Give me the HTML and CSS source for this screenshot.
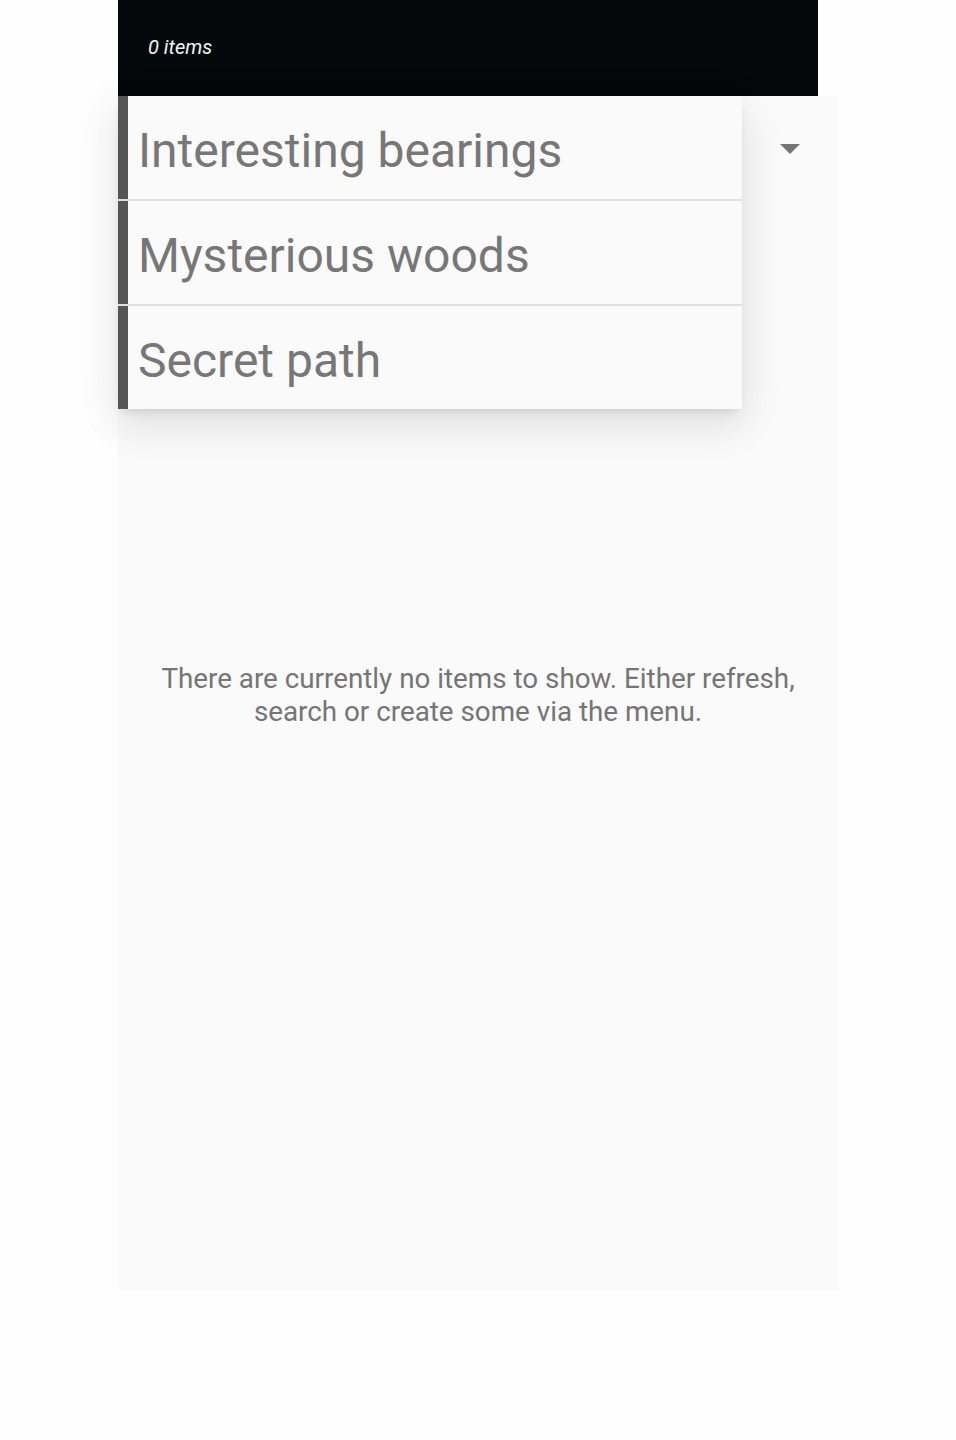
FILE: index.html
```html
<!DOCTYPE html>
<html>
<head>
<meta charset="utf-8">
<link rel="stylesheet" href="styles.css">
</head>
<body>
<div class="app">
  <header class="topbar"><span class="count">0 items</span></header>
  <main class="panel">
    <div class="toolbar">
      <svg class="caret" width="20" height="10" viewBox="0 0 20 10"><path d="M0 0 L20 0 L10 10 Z" fill="#757575"/></svg>
    </div>
    <div class="empty">There are currently no items to show. Either refresh,<br>search or create some via the menu.</div>
    <ul class="menu">
      <li class="menu-item">Interesting bearings</li>
      <li class="menu-item">Mysterious woods</li>
      <li class="menu-item">Secret path</li>
    </ul>
  </main>
</div>
</body>
</html>
```
FILE: styles.css
```css
html, body { margin: 0; padding: 0; background: #fefefe; }
body { font-family: Roboto, "Liberation Sans", sans-serif; }
.app { margin-left: 118px; width: 720px; }
.topbar {
  width: 700px; height: 96px; background: #05080a; box-sizing: border-box;
  padding: 36px 0 0 30px;
}
.count { color: #f2f2f2; font-style: italic; font-size: 20px; line-height: 23px; }
.panel {
  position: relative; height: 1194px; background: #fafafa;
  display: flex; flex-direction: column;
}
.toolbar { height: 104px; display: flex; justify-content: flex-end; align-items: center; padding-right: 38px; }
.caret { display: block; margin-top: 1px; }
.empty {
  flex: 1; display: flex; align-items: center; justify-content: center; text-align: center;
  color: #757575; font-size: 27.8px; line-height: 33px; padding-bottom: 100px;
}
.menu {
  position: absolute; left: 0; top: 0; width: 624px; margin: 0; padding: 0; list-style: none;
  background: #e0e0e0;
  box-shadow: 0 18px 36px 4px rgba(0,0,0,.06), 0 8px 44px 8px rgba(0,0,0,.04), 0 6px 10px -4px rgba(0,0,0,.12);
}
.menu-item {
  height: 103px; box-sizing: border-box; background: #fafafa; border-left: 10px solid #555;
  padding: 5px 0 0 10px; display: flex; align-items: center;
  color: #777; font-size: 48px; letter-spacing: 0; margin-bottom: 2px;
}
.menu-item:last-child { margin-bottom: 0; }
```
